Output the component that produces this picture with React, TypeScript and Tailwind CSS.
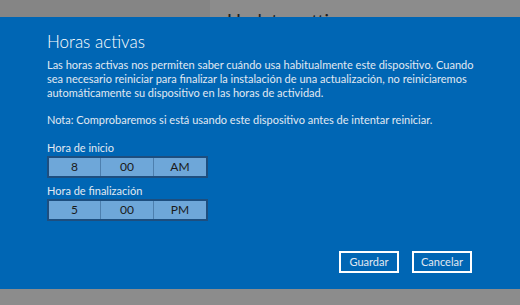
import React from "react";

function Picker({ h, m, p }: { h: string; m: string; p: string }) {
  return (
    <div className="flex w-[161px] h-[22px] border-2 border-[#1d4e7f] bg-[#6ea7d9] text-[12px] text-[#1a1a1a]">
      <div className="w-[52px] flex items-center justify-center border-r border-[#4d7fae]">{h}</div>
      <div className="w-[53px] flex items-center justify-center border-r border-[#4d7fae]">{m}</div>
      <div className="flex-1 flex items-center justify-center">{p}</div>
    </div>
  );
}

export default function App() {
  return (
    <div
      className="w-[520px] h-[305px] flex flex-col overflow-hidden bg-[#8c8c8c]"
      style={{ fontFamily: 'Lato, "Noto Sans", sans-serif' }}
    >
      <div className="h-[17px] flex shrink-0 overflow-hidden">
        <div className="w-[210px] bg-[#858585]" />
        <div className="flex-1 bg-[#8c8c8c] pl-[17px] pt-[9px] text-[19px] leading-[24px] text-[#1f1f1f] whitespace-nowrap">
          Update settings
        </div>
      </div>
      <div className="h-[272px] shrink-0 bg-[#0066b4] pl-[47px] pr-[40px] pt-[14px] flex flex-col">
        <div className="text-[17px] leading-[22px] text-white font-light">Horas activas</div>
        <div className="mt-[5px] text-[11px] leading-[14px] text-[#e1e9f2] whitespace-nowrap">
          Las horas activas nos permiten saber cuándo usa habitualmente este dispositivo. Cuando
          <br />
          sea necesario reiniciar para finalizar la instalación de una actualización, no reiniciaremos
          <br />
          automáticamente su dispositivo en las horas de actividad.
        </div>
        <div className="mt-[13px] text-[11px] leading-[14px] text-[#e1e9f2]">
          Nota: Comprobaremos si está usando este dispositivo antes de intentar reiniciar.
        </div>
        <div className="mt-[13px] text-[11px] leading-[15px] text-[#e1e9f2]">Hora de inicio</div>
        <div className="mt-[1px]"><Picker h="8" m="00" p="AM" /></div>
        <div className="mt-[5px] text-[11px] leading-[15px] text-[#e1e9f2]">Hora de finalización</div>
        <div className="mt-[1px]"><Picker h="5" m="00" p="PM" /></div>
        <div className="mt-[30px] flex justify-end gap-[13px] pr-[8px]">
          <button className="w-[60px] h-[22px] border-2 border-white text-[11px] text-[#e1e9f2] flex items-center justify-center">Guardar</button>
          <button className="w-[60px] h-[22px] border-2 border-white text-[11px] text-[#e1e9f2] flex items-center justify-center">Cancelar</button>
        </div>
      </div>
      <div className="flex-1 bg-[#8c8c8c]" />
    </div>
  );
}
